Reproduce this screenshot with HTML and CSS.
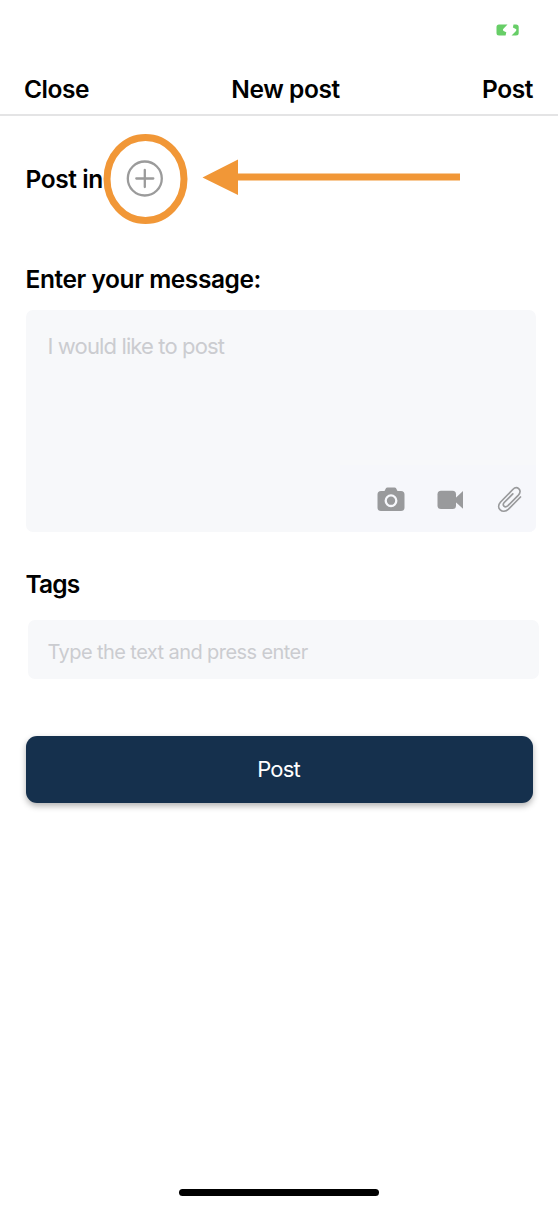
FILE: index.html
```html
<!DOCTYPE html>
<html lang="en">
<head>
<meta charset="utf-8">
<title>New post</title>
<link rel="stylesheet" href="styles.css">
</head>
<body>
<div class="screen">
  <div class="status">
    <svg class="battery" width="24" height="12" viewBox="0 0 24 12" fill="#67ce67">
      <path d="M3 .5h8.500L7.200 5.100Q6.400 6.200 7.600 6.900L10.300 8.300 9.600 11.500H3Q.5 11.500.5 9V3Q.5.500 3 .5z"/>
      <path d="M17.500.5h2.500Q22.700.5 22.700 3v6q0 2.500-2.700 2.500h-4.500l4.500-4.600q1-1.300-.2-2l-2.900-1.400z"/>
    </svg>
  </div>
  <header class="nav">
    <span class="nav-close">Close</span>
    <span class="nav-title">New post</span>
    <span class="nav-post">Post</span>
  </header>
  <main class="form">
    <div class="target">
      <span class="heading post-in">Post in</span>
      <svg class="callout" width="360" height="92" viewBox="0 0 360 92">
        <ellipse cx="42.500" cy="46" rx="38.500" ry="41.500" fill="none" stroke="#f19737" stroke-width="7"/>
        <g fill="none" stroke="#9b9b9b" stroke-linecap="round">
          <circle cx="41.800" cy="45.500" r="17" stroke-width="2.300"/>
          <path d="M33.300 45.500h17M41.800 37v17" stroke-width="2.300"/>
        </g>
        <path d="M99.500 44.500L135 26.500V40.500h222v7H135v14.500z" fill="#f19737"/>
      </svg>
    </div>
    <h2 class="heading message-label">Enter your message:</h2>
    <div class="message">
      <span class="placeholder">I would like to post</span>
      <div class="tools">
        <svg width="28" height="25" viewBox="0 0 28 25">
          <path d="M4 4h3.500l1.300-2.500Q9.300.500 10.500.500h7q1.200 0 1.700 1L20.500 4H24q3.500 0 3.500 3.500v13q0 3.500-3.500 3.500H4Q.5 24 .5 20.500v-13Q.5 4 4 4z" fill="#999a9c"/>
          <circle cx="14" cy="13.700" r="5.300" fill="none" stroke="#f7f8fc" stroke-width="2.300"/>
        </svg>
        <svg width="27" height="20" viewBox="0 0 27 20" fill="#999a9c">
          <rect x=".5" y=".7" width="18.500" height="18.300" rx="3.500"/>
          <path d="M18 8.500L26 1v17.700l-8-7.200z"/>
        </svg>
        <svg width="26" height="28" viewBox="0 0 26 28" fill="none" stroke="#999a9c" stroke-width="1.700" stroke-linecap="round">
          <path d="M23.500 11L11.500 23.100C5.500 28.800-1.800 22 3.600 16L15.800 3.500C20-.7 26 4.200 21.400 9.100L11 19.600C7.800 22.500 4.600 19.200 7.200 16.500L15.800 7.900"/>
        </svg>
      </div>
    </div>
    <h2 class="heading tags-label">Tags</h2>
    <div class="tags"><span class="placeholder tags-placeholder">Type the text and press enter</span></div>
    <button class="submit" type="button">Post</button>
  </main>
  <div class="home-bar"></div>
</div>
</body>
</html>
```
FILE: styles.css
```css
* { box-sizing: border-box; }
body { margin: 0; background: #fff; color: #000; font-family: Inter, "Liberation Sans", sans-serif; }
svg { display: block; flex: none; }
.screen { width: 558px; height: 1207px; display: flex; flex-direction: column; overflow: hidden; }
.status { height: 60px; padding: 24px 38px 0 0; display: flex; justify-content: flex-end; }
.nav {
  height: 56px; padding: 3px 25px 0 24px; border-bottom: 2px solid #e4e4e5;
  display: grid; grid-template-columns: 1fr auto 1fr; align-items: center;
  font-size: 24.5px; line-height: 30px; font-weight: 600; letter-spacing: -.43px; white-space: nowrap;
}
.nav-title { padding-left: 14px; }
.nav-post { text-align: right; }
.form { padding: 0 19px 0 25.500px; display: flex; flex-direction: column; }
.heading { margin: 0; font-size: 24.5px; line-height: 30px; font-weight: 600; letter-spacing: -.43px; white-space: nowrap; }
.target { height: 92px; margin-top: 17px; display: flex; align-items: center; }
.post-in { width: 77.500px; }
.message-label { margin-top: 39px; }
.message {
  width: 510px; height: 222px; margin-top: 16px; padding: 21px 0 0 22px; border-radius: 7px; background: #f7f8fa;
  display: flex; flex-direction: column; justify-content: space-between; overflow: hidden;
}
.placeholder { font-size: 22px; line-height: 30px; letter-spacing: -.87px; color: #cbccd0; white-space: nowrap; }
.tools {
  align-self: flex-end; width: 196px; height: 67px; padding: 2px 12.500px 0 37px; background: #f6f7fb;
  display: flex; align-items: center; justify-content: space-between;
}
.tags-label { margin-top: 37px; letter-spacing: -.8px; }
.tags { width: 511px; height: 59px; margin: 21px 0 0 2.500px; padding: 4px 0 0 19.500px; border-radius: 7px; background: #f7f8fa; display: flex; align-items: center; }
.tags-placeholder { font-size: 20px; letter-spacing: -.58px; }
.submit {
  width: 507px; height: 67px; margin-top: 57px; padding: 0 1px 2px 0; border: 0; border-radius: 11px;
  background: #15304d; color: #fff; font: 400 22px/30px Inter, "Liberation Sans", sans-serif; letter-spacing: -.8px;
  box-shadow: 0 3px 6px rgba(0, 0, 0, .3);
}
.home-bar { width: 200px; height: 7px; margin: auto auto 11px; border-radius: 4px; background: #000; }
```
